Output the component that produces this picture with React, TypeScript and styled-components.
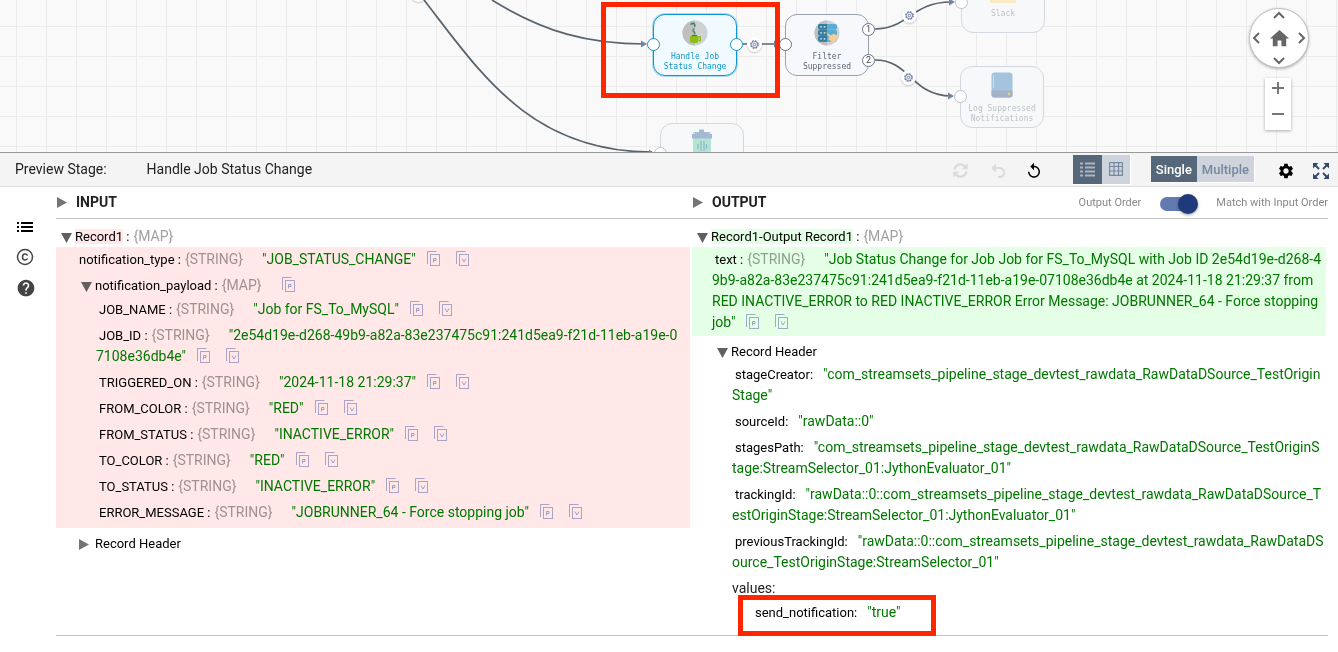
import React from 'react';
import styled, { createGlobalStyle, css } from 'styled-components';
import { MdHelp, MdHome, MdReplay, MdSettings } from 'react-icons/md';
import { FaSyncAlt } from 'react-icons/fa';

const GlobalStyle = createGlobalStyle`
  *, *::before, *::after { box-sizing: border-box; }
  body {
    margin: 0;
    background: #fff;
    color: #222;
    font-family: Roboto, "Liberation Sans", sans-serif;
    font-size: 14px;
    line-height: 21px;
  }
  button {
    padding: 0;
    border: 0;
    background: none;
    color: inherit;
    font: inherit;
    cursor: pointer;
  }
  svg { display: block; }
`;

/* ---------- pipeline canvas ---------- */

const Canvas = styled.section`
  position: relative;
  height: 152px;
  overflow: hidden;
  background-color: #f9f9f9;
  background-image: linear-gradient(to right, #ececec 1px, transparent 1px),
    linear-gradient(to bottom, #ececec 1px, transparent 1px);
  background-size: 30px 30px;
  background-position: 16px 26px;
`;

const Edges = styled.svg`
  position: absolute;
  inset: 0;
  width: 100%;
  height: 100%;
`;

type Tone = 'active' | 'normal' | 'faded';
const tones = {
  active: { line: '#1197d0', port: '#1197d0', fill: '#f1faff', text: '#1197d0' },
  normal: { line: '#97a3b5', port: '#66768c', fill: '#f6f8fb', text: '#5d6672' },
  faded: { line: '#d3d8e0', port: '#bcc3ce', fill: '#f7f8fa', text: '#bfc2c6' },
};

const StageBox = styled.div<{ $x: number; $y: number; $tone: Tone }>`
  position: absolute;
  left: ${p => p.$x}px;
  top: ${p => p.$y}px;
  width: 84px;
  height: 62px;
  padding-top: 5px;
  display: flex;
  flex-direction: column;
  align-items: center;
  border: 1px solid ${p => tones[p.$tone].line};
  border-radius: 12px;
  background: ${p => tones[p.$tone].fill};
  color: ${p => tones[p.$tone].text};
  ${p => p.$tone === 'active' && css`box-shadow: 0 0 0 1px #a9daee;`}
`;

const StageLabel = styled.span`
  margin-top: 6px;
  font-family: "DejaVu Sans Mono", monospace;
  font-size: 8px;
  line-height: 10px;
  text-align: center;
  white-space: pre;
`;

const Port = styled.span<{ $x: number; $y: number; $tone: Tone }>`
  position: absolute;
  left: ${p => p.$x}px;
  top: ${p => p.$y}px;
  width: 13px;
  height: 13px;
  display: flex;
  align-items: center;
  justify-content: center;
  border: 1px solid ${p => tones[p.$tone].port};
  border-radius: 50%;
  background: #fff;
  color: #444;
  font-size: 9px;
  line-height: 11px;
`;

const EdgeBadge = styled.button<{ $x: number; $y: number }>`
  position: absolute;
  left: ${p => p.$x}px;
  top: ${p => p.$y}px;
  width: 15px;
  height: 15px;
  display: grid;
  place-items: center;
  border-radius: 50%;
  background: #fff;
  box-shadow: 0 1px 2px rgba(0, 0, 0, 0.2);
`;

const CanvasControls = styled.div`
  position: absolute;
  top: 8px;
  right: 29px;
  display: flex;
  flex-direction: column;
  align-items: center;
  gap: 10px;
`;

const PanPad = styled.div`
  width: 60px;
  height: 60px;
  display: grid;
  grid-template-columns: 12px 34px 12px;
  grid-template-rows: 12px 34px 12px;
  place-content: center;
  place-items: center;
  border: 1px solid #c2c2c2;
  border-radius: 50%;
  background: #fff;
  box-shadow: 0 1px 3px rgba(0, 0, 0, 0.3);
  color: #666;
  & > button:nth-child(1) { grid-area: 1 / 2; }
  & > button:nth-child(2) { grid-area: 2 / 1; }
  & > button:nth-child(3) { grid-area: 2 / 2; }
  & > button:nth-child(4) { grid-area: 2 / 3; }
  & > button:nth-child(5) { grid-area: 3 / 2; }
`;

const ZoomBox = styled.div`
  width: 26px;
  height: 52px;
  margin-right: 2px;
  display: grid;
  grid-template-rows: 20px 32px;
  place-items: center;
  background: #fff;
  box-shadow: 0 1px 3px rgba(0, 0, 0, 0.3);
  color: #777;
`;

/* ---------- preview toolbar ---------- */

const Toolbar = styled.header`
  display: flex;
  align-items: center;
  height: 35px;
  padding: 0 9px 0 15px;
  border-top: 1px solid #999;
  border-bottom: 1px solid #dedede;
  background: #f4f4f4;
`;

const ToolbarTitle = styled.span`
  margin-left: 40px;
  flex: 1;
`;

const ToolButton = styled.button<{ $gap: number; $color: string }>`
  width: 16px;
  height: 18px;
  margin: 2px ${p => p.$gap}px 0 0;
  display: grid;
  place-items: center;
  color: ${p => p.$color};
`;

const Segmented = styled.div<{ $gap: number }>`
  display: flex;
  margin-right: ${p => p.$gap}px;
  border: 1px solid #fff;
  border-width: 0 1px 1px 0;
  background: #ced3dc;
`;

const Segment = styled.button<{ $on?: boolean; $text?: boolean }>`
  height: ${p => (p.$text ? 26 : 29)}px;
  padding: 0 ${p => (p.$text ? 5 : 7)}px;
  display: flex;
  align-items: center;
  background: ${p => (p.$on ? '#566779' : '#ced3dc')};
  color: ${p => (p.$on ? (p.$text ? '#fff' : '#aab6c3') : '#7488a0')};
  font-size: 13px;
  font-weight: 500;
`;

/* ---------- preview body ---------- */

const Preview = styled.main`
  display: flex;
  padding-right: 10px;
`;

const Rail = styled.nav`
  width: 56px;
  flex: none;
  padding: 31px 0 0 16px;
  display: flex;
  flex-direction: column;
  gap: 12px;
  color: #444;
  & > button { width: 18px; height: 18px; display: grid; place-items: center; }
`;

const Columns = styled.div`
  flex: 1;
  min-width: 0;
  display: grid;
  grid-template-columns: 1fr 1fr;
  border-bottom: 1px solid #c4c4c4;
`;

const ColumnHead = styled.div`
  height: 32px;
  display: flex;
  align-items: center;
  border-bottom: 1px solid #c4c4c4;
`;

const HeadToggle = styled.button`
  flex: 1;
  display: flex;
  align-items: center;
  gap: 8px;
  font-weight: 700;
`;

const OrderLabel = styled.label`
  color: #888;
  font-size: 11px;
`;

const OrderSwitch = styled.input`
  appearance: none;
  position: relative;
  width: 30px;
  height: 14px;
  margin: 2px 26px 0 19px;
  border-radius: 7px;
  background: #637ab0;
  &::after {
    content: '';
    position: absolute;
    right: -8px;
    top: -3px;
    width: 20px;
    height: 20px;
    border-radius: 50%;
    background: #20397a;
    box-shadow: 0 1px 3px rgba(0, 0, 0, 0.4);
  }
`;

const Tree = styled.div`
  padding: 5px 2px 9px 0;
`;

const Block = styled.div<{ $tint: string }>`
  margin-bottom: 3px;
  background: ${p => p.$tint};
`;

const Nested = styled.div`
  padding: 0 4px 2px 0;
`;

const Row = styled.div<{ $indent: number; $end?: number }>`
  padding: 2px 2px ${p => p.$end ?? 3}px ${p => p.$indent}px;
  word-break: break-all;
`;

const Key = styled.span<{ $inset?: boolean }>`
  padding-left: ${p => (p.$inset ? 3 : 0)}px;
  color: #000;
  font-size: 13px;
`;

const Mark = styled.span<{ $tint: string }>`
  background: ${p => p.$tint};
`;

const Type = styled.span`
  margin-left: 4px;
  color: #a0a0a0;
  mix-blend-mode: multiply;
`;

const Value = styled.span<{ $gap: number }>`
  padding-left: ${p => p.$gap}px;
  color: #007800;
`;

const CopyButton = styled.button<{ $gap: number }>`
  width: 14px;
  height: 16px;
  margin-left: ${p => p.$gap}px;
  vertical-align: -3px;
`;

const Expander = styled.button`
  width: 14px;
  height: 11px;
  vertical-align: -2px;
`;

const Highlighted = styled.div`
  position: relative;
  &::after {
    content: '';
    position: absolute;
    left: 46px;
    top: -5px;
    width: 198px;
    height: 41px;
    border: 5px solid #ff2600;
    pointer-events: none;
  }
`;

const StageHighlight = styled.div`
  position: absolute;
  left: 601px;
  top: 2px;
  width: 179px;
  height: 96px;
  border: 5px solid #ff2600;
  pointer-events: none;
`;

/* ---------- drawings ---------- */

const Triangle = ({ down }: { down?: boolean }) => (
  <svg width="12" height="11" viewBox="0 0 12 11" fill={down ? '#606060' : '#757575'}>
    <path d={down ? 'M0 1H11L5.5 11Z' : 'M1 0V11L11 5.5Z'} />
  </svg>
);

const Gear = () => (
  <svg width="9" height="9" viewBox="0 0 10 10" fill="none" stroke="#5a6a98">
    <circle cx="5" cy="5" r="4.2" strokeWidth="1.2" strokeDasharray="2 1.3" />
    <circle cx="5" cy="5" r="3.4" strokeWidth=".8" />
    <circle cx="5" cy="5" r="1.4" strokeWidth=".9" />
  </svg>
);

const Chevron = ({ turn }: { turn: number }) => (
  <svg width="12" height="12" viewBox="0 0 12 12" fill="none" stroke="#666" strokeWidth="2">
    <path d="M1 9L6 4L11 9" transform={`rotate(${turn} 6 6)`} />
  </svg>
);

const CupIcon = () => (
  <svg width="26" height="26" viewBox="0 0 26 26">
    <circle cx="13" cy="13" r="12.5" fill="#cfd1d5" />
    <path d="M13 .5A12.5 12.5 0 0 0 13 25.5Z" fill="#bfbfbf" />
    <path d="M8 16H16.500V21Q16.500 23 14.500 23H10Q8 23 8 21Z" fill="#8dbd1a" />
    <path d="M16.500 17H18.300V20.500H16.500" fill="none" stroke="#8dbd1a" strokeWidth="1.300" />
    <path d="M8.500 4.500Q10.500 3 12 3.500Q13.500 5 12.500 7" fill="none" stroke="#38805a" strokeWidth="1.500" />
    <path d="M12.500 8.500Q10 10 11.500 11.500Q13.500 12.500 12.500 14.500" fill="none" stroke="#4d8a6c" strokeWidth="1.400" />
    <path d="M10 15.500H15" stroke="#2f7a35" strokeWidth="1" />
  </svg>
);

const FilterIcon = () => (
  <svg width="26" height="26" viewBox="0 0 26 26">
    <circle cx="13" cy="13" r="12.500" fill="#cfd1d5" />
    <path d="M13 .5A12.500 12.500 0 0 0 13 25.500Z" fill="#bfbfbf" />
    {[4, 10, 16].map(y => (
      <g key={y}>
        <rect x="4" y={y} width="19" height="5.700" rx="2" fill="#59acd4" />
        <path d={`M6 ${y}H13V${y + 5.700}H6Q4 ${y + 5.700} 4 ${y + 2.800}Q4 ${y} 6 ${y}Z`} fill="#397d9e" />
        <circle cx="7" cy={y + 2.800} r=".9" fill="#cde5ef" />
        <circle cx="10.500" cy={y + 2.800} r=".9" fill="#cde5ef" />
      </g>
    ))}
    <path d="M12 12L16.500 15.500L20 13.500L23.500 16.500L22.500 21Q18 23.500 15.500 20L13.500 19L15.500 18Z" fill="#f5cf9b" />
  </svg>
);

const DiskIcon = () => (
  <svg width="22" height="26" viewBox="0 0 22 26">
    <rect x=".5" y=".5" width="21" height="25" rx="3" fill="#a3c4dc" />
    <path d="M.500 18.500H21.500V23Q21.500 25.500 19 25.500H3Q.500 25.500 .500 23Z" fill="#a3b2c6" />
    <path d="M2.500 3V16" stroke="#c9deeb" strokeWidth="1" />
    <circle cx="18" cy="22" r="1.200" fill="#ecd47d" />
  </svg>
);

const TrashIcon = () => (
  <svg width="22" height="26" viewBox="0 0 22 26">
    <path d="M2 3H20V26H2Z" fill="#b3e5d4" />
    <path d="M8 3V.500H13V3M4 3H18V5H21V9.500H1V5H4Z" fill="#a5b8d6" />
    <path d="M7 15V20M10 12V22M13 12V22M15.500 15V20" stroke="#93b9c9" strokeWidth="1.300" />
  </svg>
);

const CopyGlyph = ({ letter }: { letter: 'P' | 'V' }) => (
  <svg width="14" height="16" viewBox="0 0 14 16" fill="none" stroke="#6d77b3" strokeOpacity=".6">
    <path d="M.500 13V.500H9.500" />
    <rect x="3.500" y="3.500" width="9" height="11" />
    <path d={letter === 'P' ? 'M6.500 11.500V7.500H9V9.500H6.500' : 'M6 7.500L8 11L10 7.500'} />
  </svg>
);

const CopyPair = ({ path, only }: { path: string; only?: boolean }) => (
  <>
    <CopyButton $gap={only ? 20 : 11} aria-label={`Copy path of ${path}`}><CopyGlyph letter="P" /></CopyButton>
    {!only && <CopyButton $gap={15} aria-label={`Copy value of ${path}`}><CopyGlyph letter="V" /></CopyButton>}
  </>
);

/* ---------- record rows ---------- */

const Field = ({ name, value, indent }: { name: string; value: string; indent: number }) => (
  <Row $indent={indent}>
    <Key $inset>{name} :</Key>
    <Type>{'{STRING}'}</Type>
    <Value $gap={19}>"{value}"</Value>
    <CopyPair path={name} />
  </Row>
);

const Attribute = ({ name, value, indent }: { name: string; value: string; indent: number }) => (
  <Row $indent={indent}>
    <Key $inset>{name}:</Key>
    <Value $gap={10}>"{value}"</Value>
  </Row>
);

const payload = [
  ['JOB_NAME', 'Job for FS_To_MySQL'],
  ['JOB_ID', '2e54d19e-d268-49b9-a82a-83e237475c91:241d5ea9-f21d-11eb-a19e-07108e36db4e'],
  ['TRIGGERED_ON', '2024-11-18 21:29:37'],
  ['FROM_COLOR', 'RED'],
  ['FROM_STATUS', 'INACTIVE_ERROR'],
  ['TO_COLOR', 'RED'],
  ['TO_STATUS', 'INACTIVE_ERROR'],
  ['ERROR_MESSAGE', 'JOBRUNNER_64 - Force stopping job'],
];

const attributes = [
  ['stageCreator', 'com_streamsets_pipeline_stage_devtest_rawdata_RawDataDSource_TestOriginStage'],
  ['sourceId', 'rawData::0'],
  ['stagesPath', 'com_streamsets_pipeline_stage_devtest_rawdata_RawDataDSource_TestOriginStage:StreamSelector_01:JythonEvaluator_01'],
  ['trackingId', 'rawData::0::com_streamsets_pipeline_stage_devtest_rawdata_RawDataDSource_TestOriginStage:StreamSelector_01:JythonEvaluator_01'],
  ['previousTrackingId', 'rawData::0::com_streamsets_pipeline_stage_devtest_rawdata_RawDataDSource_TestOriginStage:StreamSelector_01'],
];

const PINK = '#ffe8e7';
const GREEN = '#e4ffe5';

function PipelineCanvas() {
  return (
    <Canvas>
      <Edges fill="none" stroke="#58636e" strokeWidth="1.700">
        <path d="M492 0C545 33 590 44 645 44" />
        <path d="M424 0C480 72 530 152 652 152" />
        <path d="M742 44H778" />
        <path d="M875 29C908 29 912 2 951 2" />
        <path d="M875 60C910 60 912 96 951 96" />
        <g fill="#74869b" stroke="none">
          <path d="M641 40.500L647 44L641 47.500Z" />
          <path d="M774 40.500L780 44L774 47.500Z" />
          <path d="M949 -1.500L955 2L949 5.500Z" />
          <path d="M948 92.500L954 96L948 99.500Z" />
          <path d="M649 149.500L654 153L649 156Z" />
        </g>
      </Edges>
      <StageBox $x={653} $y={14} $tone="active">
        <CupIcon />
        <StageLabel>{'Handle Job\nStatus Change'}</StageLabel>
      </StageBox>
      <StageBox $x={785} $y={14} $tone="normal">
        <FilterIcon />
        <StageLabel>{'Filter\nSuppressed'}</StageLabel>
      </StageBox>
      <StageBox $x={961} $y={-29} $tone="faded">
        <svg width="26" height="26"><path d="M0 0H26V26H0Z" fill="#fae9c5" /></svg>
        <StageLabel>Slack</StageLabel>
      </StageBox>
      <StageBox $x={960} $y={66} $tone="faded">
        <DiskIcon />
        <StageLabel>{'Log Suppressed\nNotifications'}</StageLabel>
      </StageBox>
      <StageBox $x={660} $y={123} $tone="faded">
        <TrashIcon />
      </StageBox>
      <Port $x={647} $y={38} $tone="active" />
      <Port $x={730} $y={38} $tone="active" />
      <Port $x={779} $y={38} $tone="normal" />
      <Port $x={862} $y={23} $tone="normal">1</Port>
      <Port $x={862} $y={54} $tone="normal">2</Port>
      <Port $x={955} $y={-4} $tone="faded" />
      <Port $x={954} $y={90} $tone="faded" />
      <Port $x={654} $y={147} $tone="faded" />
      <EdgeBadge $x={411} $y={-13} aria-label="Edge settings" />
      <EdgeBadge $x={747} $y={37} aria-label="Edge settings"><Gear /></EdgeBadge>
      <EdgeBadge $x={902} $y={8} aria-label="Edge settings"><Gear /></EdgeBadge>
      <EdgeBadge $x={901} $y={70} aria-label="Edge settings"><Gear /></EdgeBadge>
      <StageHighlight />
      <CanvasControls>
        <PanPad>
          <button aria-label="Pan up"><Chevron turn={0} /></button>
          <button aria-label="Pan left"><Chevron turn={-90} /></button>
          <button aria-label="Home"><MdHome size={23} /></button>
          <button aria-label="Pan right"><Chevron turn={90} /></button>
          <button aria-label="Pan down"><Chevron turn={180} /></button>
        </PanPad>
        <ZoomBox>
          <button aria-label="Zoom in">
            <svg width="12" height="12" stroke="currentColor" strokeWidth="2"><path d="M0 6H12M6 0V12" /></svg>
          </button>
          <button aria-label="Zoom out">
            <svg width="12" height="12" stroke="currentColor" strokeWidth="2"><path d="M0 6H12" /></svg>
          </button>
        </ZoomBox>
      </CanvasControls>
    </Canvas>
  );
}

function PreviewToolbar() {
  return (
    <Toolbar>
      <span>Preview Stage:</span>
      <ToolbarTitle>Handle Job Status Change</ToolbarTitle>
      <ToolButton $gap={21} $color="#dadada" aria-label="Refresh"><FaSyncAlt size={15} /></ToolButton>
      <ToolButton $gap={19} $color="#dcdcde" aria-label="Undo">
        <svg width="16" height="16" viewBox="0 0 16 16" fill="none" stroke="currentColor" strokeWidth="2">
          <path d="M4 5H9.500Q14 5.500 14 9.500Q14 14 9.500 14H8" />
          <path d="M6 .500L1 5L6 9.500Z" fill="currentColor" stroke="none" />
        </svg>
      </ToolButton>
      <ToolButton $gap={32} $color="#000" aria-label="Reset"><MdReplay size={18} /></ToolButton>
      <Segmented $gap={20}>
        <Segment $on aria-label="List view">
          <svg width="15" height="15" viewBox="0 0 15 15" stroke="currentColor" strokeWidth="2">
            <path d="M0 1.500H3M5 1.500H15M0 5.500H3M5 5.500H15M0 9.500H3M5 9.500H15M0 13.500H3M5 13.500H15" />
          </svg>
        </Segment>
        <Segment aria-label="Table view">
          <svg width="14" height="14" viewBox="0 0 14 14" fill="none" stroke="currentColor">
            <rect x=".5" y=".5" width="13" height="13" rx="1" strokeWidth="1.300" />
            <path d="M.500 4.500H13.500M.500 9H13.500M5 .500V13.500M9.500 .500V13.500" strokeWidth="1.200" />
          </svg>
        </Segment>
      </Segmented>
      <Segmented $gap={22}>
        <Segment $on $text>Single</Segment>
        <Segment $text>Multiple</Segment>
      </Segmented>
      <ToolButton $gap={20} $color="#000" aria-label="Settings"><MdSettings size={18} /></ToolButton>
      <ToolButton $gap={0} $color="#35476b" aria-label="Expand">
        <svg width="16" height="16" viewBox="0 0 16 16" fill="currentColor" stroke="currentColor" strokeWidth="2">
          {[0, 90, 180, 270].map(a => (
            <g key={a} transform={`rotate(${a} 8 8)`}>
              <path d="M0 0H5.500L0 5.500Z" stroke="none" />
              <path d="M2 2L6 6" />
            </g>
          ))}
        </svg>
      </ToolButton>
    </Toolbar>
  );
}

export default function App() {
  return (
    <>
      <GlobalStyle />
      <PipelineCanvas />
      <PreviewToolbar />
      <Preview>
        <Rail>
          <button aria-label="Records">
            <svg width="16" height="12" viewBox="0 0 16 12" stroke="#000" strokeWidth="2">
              <path d="M0 2H2M4 2H16M0 6H2M4 6H16M0 10H2M4 10H16" />
            </svg>
          </button>
          <button aria-label="Configuration">
            <svg width="18" height="18" viewBox="0 0 18 18" fill="none" stroke="currentColor" strokeWidth="1.500">
              <circle cx="9" cy="9" r="7.500" />
              <path d="M11.500 7.600Q11 6 9 6Q6.500 6 6.500 9Q6.500 12 9 12Q11 12 11.500 10.400" />
            </svg>
          </button>
          <button aria-label="Help">
            <MdHelp size={20} />
          </button>
        </Rail>
        <Columns>
          <section>
            <ColumnHead>
              <HeadToggle><Triangle />INPUT</HeadToggle>
            </ColumnHead>
            <Tree>
              <Row $indent={5} $end={0}>
                <Expander aria-label="Collapse Record1"><Triangle down /></Expander>
                <Key><Mark $tint={PINK}>Record1</Mark> :</Key>
                <Type>{'{MAP}'}</Type>
              </Row>
              <Block $tint={PINK}>
                <Field name="notification_type" value="JOB_STATUS_CHANGE" indent={20} />
                <Row $indent={25} $end={1}>
                  <Expander aria-label="Collapse notification_payload"><Triangle down /></Expander>
                  <Key>notification_payload :</Key>
                  <Type>{'{MAP}'}</Type>
                  <CopyPair path="notification_payload" only />
                </Row>
                <Nested>
                  {payload.map(([name, value]) => (
                    <Field key={name} name={name} value={value} indent={40} />
                  ))}
                </Nested>
              </Block>
              <Row $indent={22} $end={0}>
                <Expander aria-label="Expand Record Header"><Triangle /></Expander>
                <Key $inset>Record Header</Key>
              </Row>
            </Tree>
          </section>
          <section>
            <ColumnHead>
              <HeadToggle><Triangle />OUTPUT</HeadToggle>
              <OrderLabel htmlFor="order">Output Order</OrderLabel>
              <OrderSwitch id="order" type="checkbox" role="switch" defaultChecked />
              <OrderLabel htmlFor="order">Match with Input Order</OrderLabel>
            </ColumnHead>
            <Tree>
              <Row $indent={5} $end={0}>
                <Expander aria-label="Collapse Record1-Output Record1"><Triangle down /></Expander>
                <Key><Mark $tint={GREEN}>Record1-Output Record1</Mark> :</Key>
                <Type>{'{MAP}'}</Type>
              </Row>
              <Block $tint={GREEN}>
                <Field
                  name="text"
                  value="Job Status Change for Job Job for FS_To_MySQL with Job ID 2e54d19e-d268-49b9-a82a-83e237475c91:241d5ea9-f21d-11eb-a19e-07108e36db4e at 2024-11-18 21:29:37 from RED INACTIVE_ERROR to RED INACTIVE_ERROR Error Message: JOBRUNNER_64 - Force stopping job"
                  indent={20}
                />
              </Block>
              <Row $indent={25} $end={0}>
                <Expander aria-label="Collapse Record Header"><Triangle down /></Expander>
                <Key>Record Header</Key>
              </Row>
              {attributes.map(([name, value]) => (
                <Attribute key={name} name={name} value={value} indent={40} />
              ))}
              <Row $indent={40} $end={1}>values:</Row>
              <Highlighted>
                <Attribute name="send_notification" value="true" indent={60} />
              </Highlighted>
            </Tree>
          </section>
        </Columns>
      </Preview>
    </>
  );
}
